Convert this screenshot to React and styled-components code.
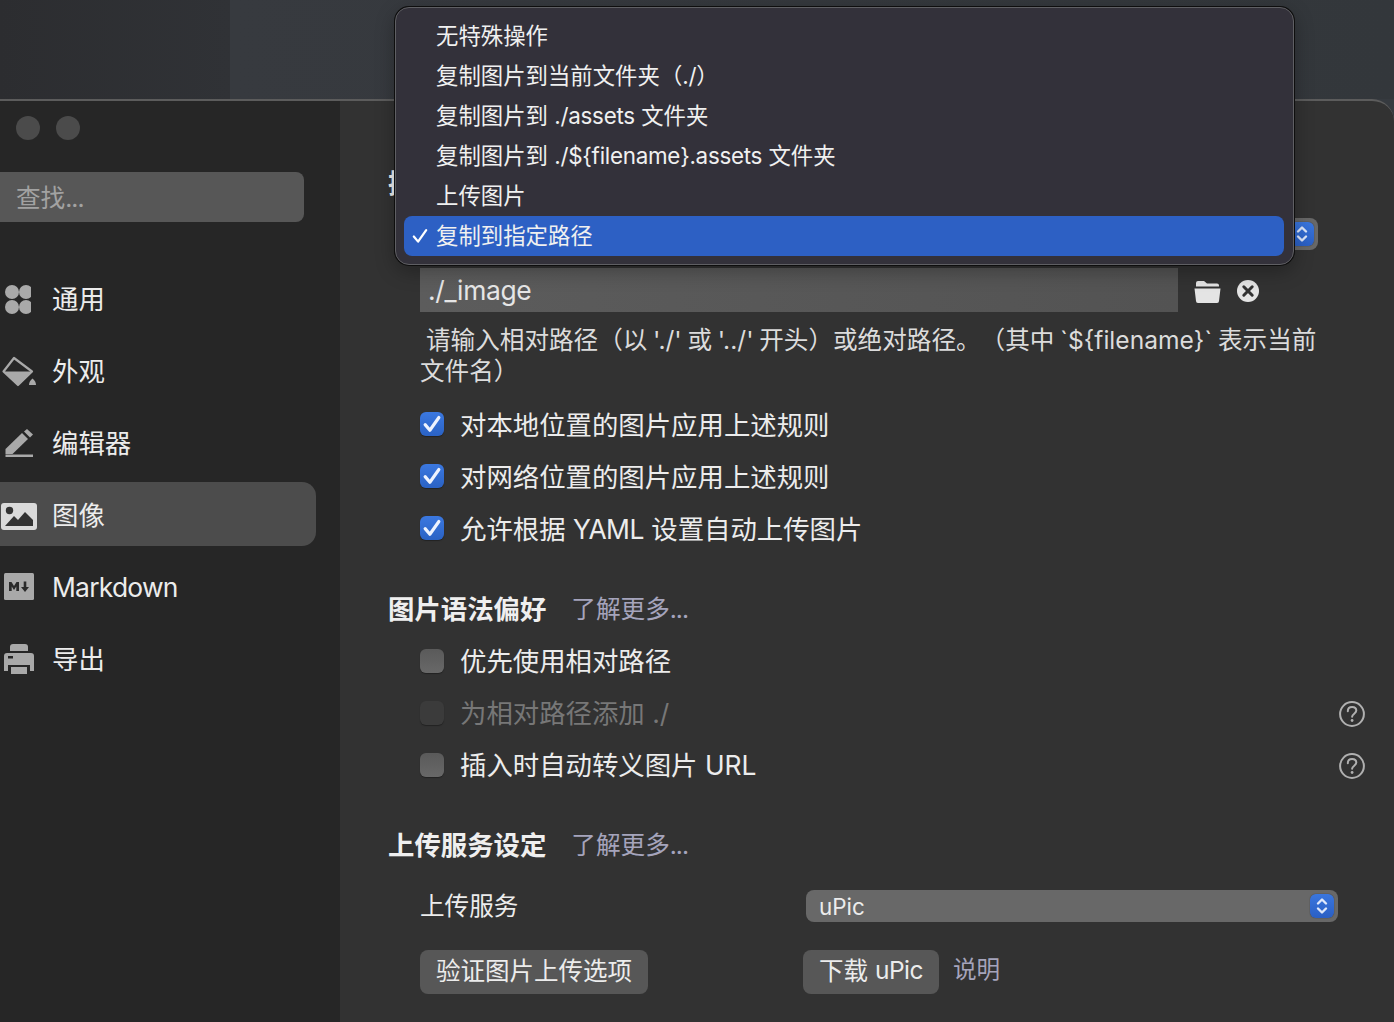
import React from "react";
import styled, { createGlobalStyle } from "styled-components";

const Global = createGlobalStyle`
  html, body { margin: 0; padding: 0; height: 100%; overflow: hidden; background: #363a3f; }
  body { font-family: Inter, "Noto Sans CJK SC", "Noto Sans", sans-serif; text-spacing-trim: space-all; }
  #root { height: 100%; }
`;

const Page = styled.div`
  position: relative; width: 1394px; height: 1022px; overflow: hidden;
  display: flex; flex-direction: column;
`;
const Band = styled.div`display: flex; height: 99px; flex: none;`;
const BandLeft = styled.div`width: 230px; background: linear-gradient(90deg, #2c2d30, #303236);`;
const BandRight = styled.div`flex: 1; background: linear-gradient(90deg, #373a3f, #33373b);`;
const Win = styled.div`
  flex: 1; display: flex; min-height: 0; overflow: hidden;
  border-top: 2px solid #5c5c5c; border-top-right-radius: 22px;
  background: #323232;
`;
const Side = styled.aside`
  width: 340px; flex: none; background: #262626; display: flex; flex-direction: column;
  padding-top: 15px; box-sizing: border-box;
`;
const Dots = styled.div`display: flex; gap: 16px; padding-left: 16px;`;
const Dot = styled.span`width: 24px; height: 24px; border-radius: 50%; background: #4b4b4b;`;
const Search = styled.div`
  margin-top: 32px; width: 304px; height: 50px; background: #575757; border-radius: 0 8px 8px 0;
  padding: 0 0 3px 16px; box-sizing: border-box; display: flex; align-items: center;
  font-size: 24.6px; color: #a2a2a2;
`;
const Nav = styled.nav`margin-top: 44px; display: flex; flex-direction: column; gap: 8px;`;
const Item = styled.div`
  width: 316px; height: 64px; display: flex; align-items: center; box-sizing: border-box;
  border-radius: 0 14px 14px 0; background: ${p => (p.$on ? "#4c4c4c" : "transparent")};
  font-size: 26.4px; color: #ececec; padding-bottom: 2px;
`;
const IconSlot = styled.span`
  width: 52px; flex: none; display: flex; align-items: center; padding-left: 1px; margin-top: 4px; box-sizing: border-box;
  svg { display: block; }
`;
const Lat = styled.span`letter-spacing: ${p => p.$ls ?? -0.012}em;`;
const NavLat = styled(Lat)`margin-top: 4px;`;
const Main = styled.main`
  flex: 1; min-width: 0; padding: 62px 29px 0 48px; box-sizing: border-box; color: #ececec;
  display: flex; flex-direction: column;
`;
const Head = styled.div`
  height: 40px; flex: none; display: flex; align-items: center; gap: 25px; box-sizing: border-box; padding-bottom: 4px;
  margin-top: ${p => p.$mt || 0}px; font-size: 26.4px; font-weight: 700; color: #efefef;
`;
const More = styled.span`font-size: 24.6px; font-weight: 400; color: #a5a4bc;`;
const Select = styled.div`
  height: 32px; box-sizing: border-box; background: #686868; border-radius: 8px; flex: none;
  display: flex; align-items: center; justify-content: space-between; padding: 0 4px 0 13px;
  width: ${p => p.$w}px; margin-left: ${p => p.$ml || 0}px; margin-top: ${p => p.$mt || 0}px;
  font-size: 22.4px; color: #ececec;
`;
const Spin = styled.span`
  width: 24px; height: 24px; border-radius: 6px; display: flex; align-items: center; justify-content: center;
  background: linear-gradient(#3a76de, #2a5fc4); box-shadow: 0 0 1px #222;
`;
const PathRow = styled.div`
  margin: 18px 0 0 32px; display: flex; align-items: center; height: 44px; flex: none;
`;
const PathInput = styled.div`
  width: 758px; height: 44px; box-sizing: border-box; background: linear-gradient(90deg, #5c5c5c, #535353);
  padding-left: 8px; display: flex; align-items: center; font-size: 26.4px; color: #e6e6e6;
`;
const PathIcons = styled.div`display: flex; align-items: center; gap: 16px; margin: 2px 0 0 16px;`;
const Help = styled.p`
  margin: 13px 0 0 32px; width: 906px; font-size: 24.6px; line-height: 31px; color: #dcdcdc;
  text-indent: 6px; word-spacing: -1.2px;
`;
const Check = styled.div`
  height: 52px; flex: none; display: flex; align-items: center; gap: 16px; margin-left: 32px;
  font-size: 26.4px; color: ${p => (p.$off ? "#777" : "#ececec")};
`;
const CheckText = styled.span`margin-bottom: ${p => (p.$on ? 1 : 3)}px;`;
const Group = styled.div`margin-top: ${p => p.$mt}px; display: flex; flex-direction: column;`;
const Box = styled.span`
  width: 24px; height: 24px; flex: none; border-radius: 6px; display: flex; align-items: center; justify-content: center;
  background: ${p => p.$on ? "linear-gradient(#3b78e0, #2a62c4)" : p.$off ? "#3b3b3b" : "linear-gradient(#5a5a5a, #686868)"};
  box-shadow: 0 1px 1px #222;
`;
const Q = styled.span`margin: 2px 0 0 auto; display: flex;`;
const ServiceRow = styled.div`
  margin: 25px 0 0 32px; display: flex; align-items: center; height: 32px; flex: none; font-size: 24.6px; color: #ececec;
`;
const ServiceLabel = styled.span`width: 386px; flex: none; margin-bottom: 5px;`;
const ButtonRow = styled.div`margin: 28px 0 0 32px; display: flex; align-items: center; height: 44px; flex: none;`;
const Slot = styled.div`width: 383px; flex: none;`;
const Btn = styled.span`
  display: inline-flex; height: 44px; box-sizing: border-box; align-items: center; padding: 0 16px 5px; background: #575757; border-radius: 8px;
  font-size: 24.5px; color: #ececec; white-space: pre;
`;
const Note = styled.span`margin-left: 14px; font-size: 23.6px; color: #a5a4bc; padding-bottom: 9px;`;
const Menu = styled.div`
  position: absolute; left: 395px; top: 7px; width: 899px; height: 258px; box-sizing: border-box;
  background: #33313a; border-radius: 14px; border: 1.5px solid #5f5f63; box-shadow: 0 0 0 1px #0e0e0e, 0 6px 20px rgba(0,0,0,.3);
  padding: 8px 9px 8px 8px; display: flex; flex-direction: column;
`;
const MenuItem = styled.div`
  height: 40px; flex: none; box-sizing: border-box; position: relative; display: flex; align-items: center; padding: 0 0 5px 32px;
  font-size: 22.4px; color: #f0f0f0; border-radius: 8px; background: ${p => (p.$on ? "#2d60c4" : "transparent")};
  white-space: pre;
  svg { position: absolute; left: 7px; top: 11px; }
`;

const Chev = () => (
  <svg width="12" height="18" viewBox="0 0 12 18" fill="none" stroke="#dfe8fb" strokeWidth="2.4" strokeLinecap="round" strokeLinejoin="round">
    <path d="M2 6.5 6 2.5l4 4M2 11.5l4 4 4-4" />
  </svg>
);
const Tick = ({ s = 20, c = "#eef3fe", w = 2.5 }) => (
  <svg width={s} height={s} viewBox="0 0 16 16" fill="none" stroke={c} strokeWidth={w} strokeLinecap="round" strokeLinejoin="round">
    <path d="M2.5 8.5 6.3 13 13.5 2.8" />
  </svg>
);
const HelpIcon = () => (
  <svg width="26" height="26" viewBox="0 0 26 26" fill="none" stroke="#b0b0b0">
    <circle cx="13" cy="13" r="11.9" strokeWidth="2" />
    <path d="M8.8 10.2c0-2.6 1.9-4.2 4.3-4.2 2.5 0 4.2 1.5 4.2 3.6 0 3-4.2 3.2-4.2 6.2" strokeWidth="2" strokeLinecap="round" />
    <circle cx="13.1" cy="19.5" r="1.4" fill="#b0b0b0" stroke="none" />
  </svg>
);
const IGrid = () => (
  <svg width="30" height="30" viewBox="0 0 30 30" fill="#a9a9a9">
    <circle cx="11" cy="8" r="7" /><circle cx="25" cy="8" r="7" />
    <circle cx="11" cy="23" r="7" /><circle cx="25" cy="23" r="7" />
  </svg>
);
const IBucket = () => (
  <svg width="36" height="32" viewBox="0 0 36 32">
    <path d="M13 3 2.5 16.5 17 30l14-13.5Z" fill="none" stroke="#a9a9a9" strokeWidth="2.2" strokeLinejoin="round" />
    <path d="M3 17h28L17 30Z" fill="#a9a9a9" stroke="#a9a9a9" strokeLinejoin="round" />
    <path d="M31.5 23.5c2.3 2 3.5 4 3.5 6.5h-7c0-2.5 1.2-4.5 3.5-6.5Z" fill="#a9a9a9" />
  </svg>
);
const IPencil = () => (
  <svg width="32" height="30" viewBox="0 0 32 30" fill="#a9a9a9" style={{ marginLeft: 1 }}>
    <path d="M3.5 21 20 5l6 6-15.5 15h-7Z" />
    <path d="M22 3.5 25 1l6 5.5-3 3Z" />
    <path d="M3.5 26.5H31V29H3.5Z" />
  </svg>
);
const IImage = () => (
  <svg width="36" height="27" viewBox="0 0 36 27" style={{ marginTop: 2 }}>
    <rect width="36" height="27" rx="3" fill="#dadada" />
    <circle cx="8.5" cy="7.5" r="3.7" fill="#333" />
    <path d="M4 23 13 13l4 4 7-8 8 8v6Z" fill="#333" />
  </svg>
);
const IMd = () => (
  <svg width="30" height="28" viewBox="0 0 30 28" style={{ marginLeft: 3 }}>
    <rect width="30" height="27" rx="1.5" fill="#a9a9a9" />
    <path d="M5 18V9h2.5l2.5 4 2.5-4H15v9h-2.7v-4.5L10 17l-2.3-3.5V18Z" fill="#2a2a2a" />
    <path d="M19.7 8.5h2.6V14H25l-4 5-4-5h2.7Z" fill="#2a2a2a" />
  </svg>
);
const IPrinter = () => (
  <svg width="30" height="30" viewBox="0 0 30 30" style={{ marginLeft: 3 }} fill="#a9a9a9">
    <path d="M6 3a3 3 0 0 1 3-3h12a3 3 0 0 1 3 3v4H6Z" />
    <path d="M0 12a3 3 0 0 1 3-3h24a3 3 0 0 1 3 3v15h-4v-6H4v6H0Z" />
    <rect x="4" y="12" width="5" height="2.5" fill="#262626" />
    <rect x="7" y="23" width="16" height="7" />
  </svg>
);
const IFolder = () => (
  <svg width="27" height="23" viewBox="0 0 27 23" fill="#e4e4e4">
    <path d="M2 7V3a2 2 0 0 1 2-2h6l3 2.5h10a2 2 0 0 1 2 2V6.5H2Z" />
    <path d="M.5 8.5h26L25 21a2 2 0 0 1-2 2H4a2 2 0 0 1-2-2Z" />
  </svg>
);
const IClose = () => (
  <svg width="22" height="22" viewBox="0 0 22 22">
    <circle cx="11" cy="11" r="11" fill="#e4e4e4" />
    <path d="m6.8 6.8 8.4 8.4m0-8.4-8.4 8.4" stroke="#323232" strokeWidth="3" strokeLinecap="round" />
  </svg>
);

const navs = [
  ["通用", <IGrid />], ["外观", <IBucket />], ["编辑器", <IPencil />],
  ["图像", <IImage />, true], [<NavLat $ls={-0.028}>Markdown</NavLat>, <IMd />], ["导出", <IPrinter />],
];
const menu = [
  "无特殊操作",
  <>复制图片到当前文件夹（<Lat>./</Lat>）</>,
  <>复制图片到 <Lat>./assets</Lat> 文件夹</>,
  <>复制图片到 <Lat>{"./${filename}.assets"}</Lat> 文件夹</>,
  "上传图片",
  "复制到指定路径",
];
const helpText = "请输入相对路径（以 './' 或 '../' 开头）或绝对路径。（其中 `${filename}` 表示当前文件名）";

const Opt = ({ on, off, help, children }) => (
  <Check $off={off}>
    <Box $on={on} $off={off}>{on && <Tick />}</Box>
    <CheckText $on={on}>{children}</CheckText>
    {help && <Q><HelpIcon /></Q>}
  </Check>
);
const Dots3 = () => <Lat $ls={-0.04}>...</Lat>;

export default function App() {
  return (
    <Page>
      <Global />
      <Band><BandLeft /><BandRight /></Band>
      <Win>
        <Side>
          <Dots><Dot /><Dot /></Dots>
          <Search><span>查找<Dots3 /></span></Search>
          <Nav>
            {navs.map(([t, ic, on], i) => (
              <Item key={i} $on={on}><IconSlot>{ic}</IconSlot>{t}</Item>
            ))}
          </Nav>
        </Side>
        <Main>
          <Head>插入图片时</Head>
          <Select $w={518} $ml={412} $mt={15}><span /><Spin><Chev /></Spin></Select>
          <PathRow>
            <PathInput><Lat>./_image</Lat></PathInput>
            <PathIcons><IFolder /><IClose /></PathIcons>
          </PathRow>
          <Help>{helpText}</Help>
          <Group $mt={11}>
            <Opt on>对本地位置的图片应用上述规则</Opt>
            <Opt on>对网络位置的图片应用上述规则</Opt>
            <Opt on>允许根据 <Lat $ls={-0.02}>YAML</Lat> 设置自动上传图片</Opt>
          </Group>
          <Head $mt={35}>图片语法偏好<More>了解更多<Dots3 /></More></Head>
          <Group $mt={6}>
            <Opt>优先使用相对路径</Opt>
            <Opt off help>为相对路径添加 ./</Opt>
            <Opt help>插入时自动转义图片 URL</Opt>
          </Group>
          <Head $mt={34}>上传服务设定<More>了解更多<Dots3 /></More></Head>
          <ServiceRow>
            <ServiceLabel>上传服务</ServiceLabel>
            <Select $w={532}>uPic<Spin><Chev /></Spin></Select>
          </ServiceRow>
          <ButtonRow>
            <Slot><Btn>验证图片上传选项</Btn></Slot>
            <Btn>下载 <Lat $ls={-0.02}>uPic</Lat></Btn>
            <Note>说明</Note>
          </ButtonRow>
        </Main>
      </Win>
      <Menu>
        {menu.map((m, i) => (
          <MenuItem key={i} $on={i === 5}>{i === 5 && <Tick s={18} c="#fff" w={2} />}<span>{m}</span></MenuItem>
        ))}
      </Menu>
    </Page>
  );
}
